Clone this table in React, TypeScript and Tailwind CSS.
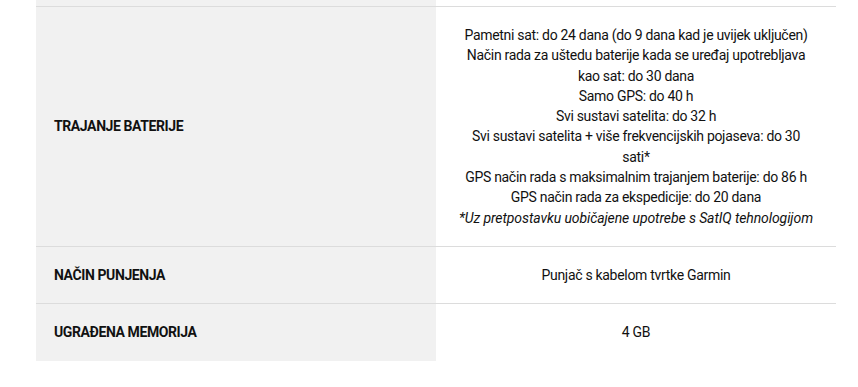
const rows = [
  {
    label: "TRAJANJE BATERIJE",
    lines: [
      "Pametni sat: do 24 dana (do 9 dana kad je uvijek uključen)",
      "Način rada za uštedu baterije kada se uređaj upotrebljava kao sat: do 30 dana",
      "Samo GPS: do 40 h",
      "Svi sustavi satelita: do 32 h",
      "Svi sustavi satelita + više frekvencijskih pojaseva: do 30 sati*",
      "GPS način rada s maksimalnim trajanjem baterije: do 86 h",
      "GPS način rada za ekspedicije: do 20 dana",
    ],
    note: "*Uz pretpostavku uobičajene upotrebe s SatIQ tehnologijom",
  },
  { label: "NAČIN PUNJENJA", lines: ["Punjač s kabelom tvrtke Garmin"] },
  { label: "UGRAĐENA MEMORIJA", lines: ["4 GB"] },
];

export default function App() {
  return (
    <div className="w-[858px] h-[387px] bg-white overflow-hidden font-['Roboto',sans-serif] text-[#111]">
      <div className="ml-[36px] w-[800px]">
        {/* tail of the previous row */}
        <div className="flex h-[6px]">
          <div className="w-[400px] bg-[#f1f1f1]" />
          <div className="w-[400px]" />
        </div>

        {rows.map((row) => (
          <div key={row.label} className="flex border-t border-[#dcdcdc]">
            <div className="w-[400px] bg-[#f1f1f1] flex items-center pl-[18px] pr-4">
              <span className="text-[14px] font-bold tracking-[-0.4px]">{row.label}</span>
            </div>
            <div className="w-[400px] py-[18px] px-[22px] text-center text-[14px] leading-[20.3px] tracking-[-0.3px]">
              {row.lines.map((l) => (
                <p key={l}>{l}</p>
              ))}
              {row.note && <p className="italic tracking-[-0.1px]">{row.note}</p>}
            </div>
          </div>
        ))}
      </div>
    </div>
  );
}
